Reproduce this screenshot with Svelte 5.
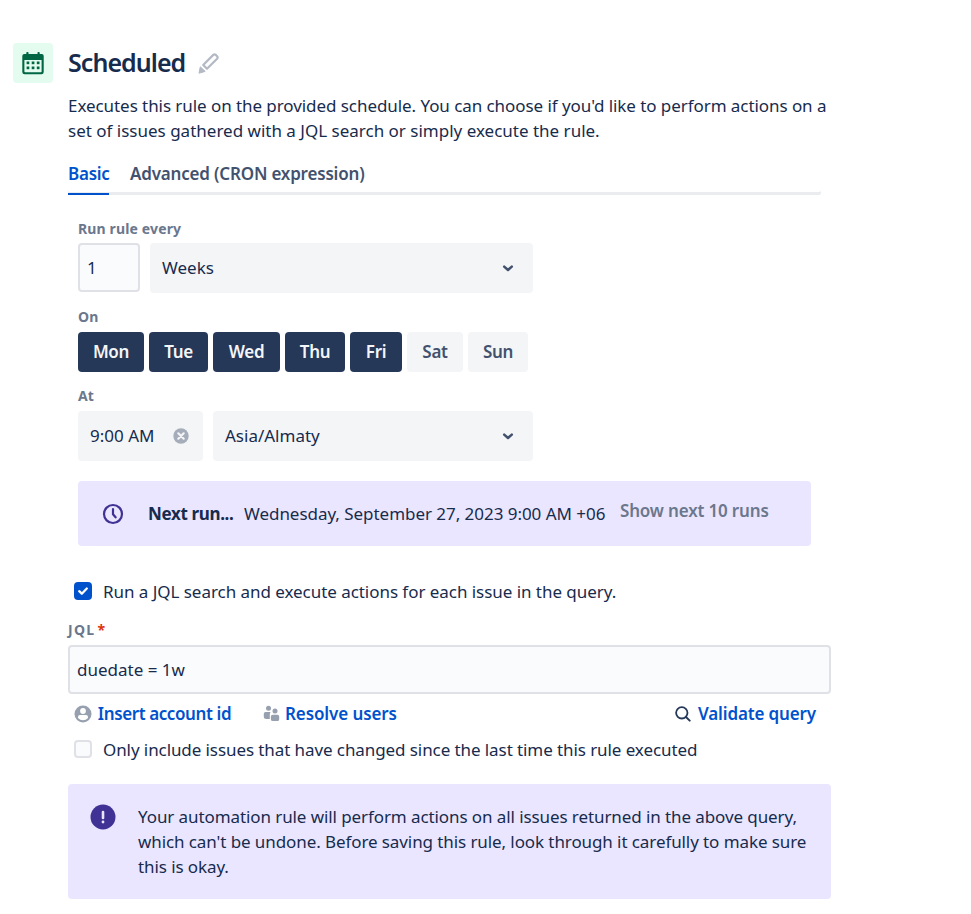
<script lang="ts">
  let days = $state([
    { name: 'Mon', width: 66, active: true },
    { name: 'Tue', width: 59, active: true },
    { name: 'Wed', width: 67, active: true },
    { name: 'Thu', width: 60, active: true },
    { name: 'Fri', width: 52, active: true },
    { name: 'Sat', width: 56, active: false },
    { name: 'Sun', width: 60, active: false },
  ]);

  let interval = $state('1');
  let jql = $state('duedate = 1w');
  let runSearch = $state(true);
  let onlyChanged = $state(false);
</script>

{#snippet chevron()}
  <svg class="chevron" width="12" height="8" viewBox="0 0 12 8">
    <path d="M2.2 2.6L6 6l3.800-3.400" fill="none" stroke="currentColor" stroke-width="2.500" stroke-linecap="round" stroke-linejoin="round" />
  </svg>
{/snippet}

<div class="rule">
  <div class="badge">
    <svg width="24" height="24" viewBox="0 0 24 24">
      <path
        fill="currentColor"
        fill-rule="evenodd"
        d="M3.300 3h17.400a2 2 0 0 1 2 2v16a2.300 2.300 0 0 1-2.300 2.300H3.600A2.300 2.300 0 0 1 1.300 21V5a2 2 0 0 1 2-2zM3.400 9v11.500q0 .8.8.8h15.600q.8 0 .8-.8V9z"
      />
      <g fill="currentColor">
        <rect x="5.300" y="1" width="2.200" height="4" rx=".8" />
        <rect x="16.500" y="1" width="2.200" height="4" rx=".8" />
        {#each [5.600, 10.700, 15.800] as x}
          <rect {x} y="10.500" width="2.700" height="2.700" />
          <rect {x} y="15.500" width="2.700" height="2.700" />
        {/each}
      </g>
    </svg>
  </div>

  <main>
    <header>
      <h1>Scheduled</h1>
      <svg class="pencil" width="22" height="22" viewBox="0 0 22 22">
        <path d="M5.200 13L15.300 2.900q1.200-1.200 2.400 0l1.400 1.400q1.200 1.200 0 2.400L9 16.800z" fill="none" stroke="currentColor" stroke-width="2.200" stroke-linejoin="round" />
        <path d="M2.300 14.800L7.200 19.400 1 21.200z" fill="currentColor" stroke="currentColor" stroke-linejoin="round" />
      </svg>
    </header>

    <p class="description">
      <span class="line l1">Executes this rule on the provided schedule. You can choose if you'd like to perform actions on a</span>
      <span class="line">set of issues gathered with a JQL search or simply execute the rule.</span>
    </p>

    <nav>
      <button class="tab selected">Basic</button>
      <button class="tab advanced">Advanced (CRON expression)</button>
    </nav>

    <section class="schedule">
      <div class="label">Run rule every</div>
      <div class="row">
        <input class="interval" bind:value={interval} />
        <div class="select unit"><span>Weeks</span>{@render chevron()}</div>
      </div>

      <div class="label on">On</div>
      <div class="days">
        {#each days as day}
          <button class="day" class:active={day.active} style="width: {day.width}px" onclick={() => (day.active = !day.active)}>
            {day.name}
          </button>
        {/each}
      </div>

      <div class="label at">At</div>
      <div class="row at-row">
        <div class="select time">
          <span>9:00 AM</span>
          <svg width="16" height="16" viewBox="0 0 16 16">
            <circle cx="8" cy="8" r="7.700" fill="#a5adba" />
            <path d="M5.300 5.300l5.400 5.400M10.700 5.300l-5.400 5.400" stroke="#f4f5f7" stroke-width="2.200" stroke-linecap="round" />
          </svg>
        </div>
        <div class="select zone"><span>Asia/Almaty</span>{@render chevron()}</div>
      </div>

      <div class="next">
        <svg width="22" height="22" viewBox="0 0 22 22">
          <circle cx="11" cy="11" r="9" fill="none" stroke="#403294" stroke-width="2.200" />
          <path d="M11 6v5.300l2.600 3" fill="none" stroke="#403294" stroke-width="2.200" stroke-linecap="round" stroke-linejoin="round" />
        </svg>
        <strong>Next run...</strong>
        <span class="date">Wednesday, September 27, 2023 9:00 AM +06</span>
        <button class="show">Show next 10 runs</button>
      </div>
    </section>

    <label class="check first">
      <input type="checkbox" bind:checked={runSearch} />
      <span class="box">
        <svg width="18" height="18" viewBox="0 0 18 18">
          <path d="M5.200 9.200l2.600 2.500 5-5.200" fill="none" stroke="currentColor" stroke-width="2.300" stroke-linecap="round" stroke-linejoin="round" />
        </svg>
      </span>
      <span class="search-text">Run a JQL search and execute actions for each issue in the query.</span>
    </label>

    <div class="label jql-label">JQL<em>*</em></div>
    <input class="jql" bind:value={jql} />

    <div class="actions">
      <button class="link">
        <svg width="18" height="18" viewBox="0 0 18 18">
          <circle cx="9" cy="9" r="8.500" fill="#97a0af" />
          <circle cx="9" cy="6" r="2.900" fill="#fff" />
          <path d="M4 13v-1.200q0-1.900 2-1.900h6q2 0 2 1.900V13q-2 2.300-5 2.300T4 13z" fill="#fff" />
        </svg>
        <span class="insert">Insert account id</span>
      </button>
      <button class="link users">
        <svg width="17" height="17" viewBox="0 0 17 17" fill="#97a0af">
          <circle cx="5.500" cy="3.300" r="2.500" />
          <path d="M2.600 7h5q-.8 1-.8 2.600V14H3.300Q.8 14 .8 12V8.800Q.8 7 2.600 7z" />
          <circle cx="12" cy="6" r="2.500" />
          <path d="M9.800 9.700h4.500q1.900 0 1.900 1.900v2.600q0 1.900-1.900 1.900H9.800q-1.900 0-1.900-1.900v-2.600q0-1.900 1.900-1.900z" />
        </svg>
        <span class="resolve">Resolve users</span>
      </button>
      <button class="link validate">
        <svg width="16" height="16" viewBox="0 0 16 16">
          <circle cx="6.800" cy="6.800" r="5.700" fill="none" stroke="#253858" stroke-width="1.800" />
          <path d="M11 11l3.700 3.700" stroke="#253858" stroke-width="1.900" stroke-linecap="round" />
        </svg>
        <span class="valid">Validate query</span>
      </button>
    </div>

    <label class="check">
      <input type="checkbox" bind:checked={onlyChanged} />
      <span class="box"></span>
      <span class="changed-text">Only include issues that have changed since the last time this rule executed</span>
    </label>

    <div class="notice">
      <svg width="26" height="26" viewBox="0 0 26 26">
        <circle cx="13" cy="13" r="12.500" fill="#403294" />
        <path d="M13 8v6" stroke="#eae6ff" stroke-width="2.600" stroke-linecap="round" />
        <circle cx="13" cy="18" r="1.400" fill="#eae6ff" />
      </svg>
      <p>
        <span class="line">Your automation rule will perform actions on all issues returned in the above query,</span>
        <span class="line">which can't be undone. Before saving this rule, look through it carefully to make sure</span>
        <span class="line">this is okay.</span>
      </p>
    </div>
  </main>
</div>

<style>
  :global(body) {
    background: #fff;
  }

  .rule {
    display: flex;
    gap: 15px;
    padding: 43px 0 0 13px;
    font-family: 'Noto Sans', 'Open Sans', sans-serif;
    font-size: 17px;
    line-height: 25px;
    color: #172b4d;
    white-space: nowrap;
  }

  button,
  input {
    font: inherit;
    color: inherit;
    letter-spacing: inherit;
    box-sizing: border-box;
    margin: 0;
    padding: 0;
    border: none;
    background: none;
    outline: none;
  }

  button {
    cursor: pointer;
  }

  svg {
    flex: none;
    display: block;
  }

  p,
  h1 {
    margin: 0;
  }

  .line {
    display: block;
  }

  .l1 {
    letter-spacing: -0.065px;
  }

  .badge {
    flex: none;
    display: flex;
    align-items: center;
    justify-content: center;
    width: 40px;
    height: 40px;
    border-radius: 4px;
    background: #e3fcef;
    color: #006644;
  }

  main {
    width: 763px;
  }

  header {
    display: flex;
    align-items: center;
    height: 40px;
  }

  h1 {
    width: 130px;
    padding-bottom: 2px;
    font-size: 25px;
    font-weight: 600;
    letter-spacing: -0.95px;
  }

  .pencil {
    color: #b3bac5;
  }

  .description {
    margin-top: 10px;
  }

  nav {
    display: flex;
    gap: 21px;
    width: 753px;
    height: 44px;
    margin-top: 8px;
    box-shadow: inset 0 -3px #ebecf0;
    border-radius: 2px;
  }

  .tab {
    height: 44px;
    font-weight: 600;
    letter-spacing: -0.25px;
    color: #42526e;
  }

  .tab.selected {
    width: 41px;
    color: #0052cc;
    box-shadow: inset 0 -2px #0052cc;
  }

  .tab.advanced {
    letter-spacing: -0.19px;
  }

  .schedule {
    padding: 24px 20px 0 10px;
  }

  .label {
    font-size: 14px;
    font-weight: 700;
    line-height: 20px;
    letter-spacing: 0.14px;
    color: #6b778c;
  }

  .row {
    display: flex;
    gap: 10px;
    margin-top: 4px;
  }

  .interval {
    width: 62px;
    height: 49px;
    padding-left: 7px;
    border: 2px solid #dfe1e6;
    border-radius: 4px;
    background: #fafbfc;
  }

  .select {
    display: flex;
    align-items: center;
    justify-content: space-between;
    box-sizing: border-box;
    height: 50px;
    padding: 0 19px 0 12px;
    border-radius: 4px;
    background: #f4f5f7;
  }

  .select span {
    padding-bottom: 2px;
  }

  .chevron {
    color: #42526e;
  }

  .unit {
    width: 383px;
  }

  .on {
    margin-top: 14px;
  }

  .days {
    display: flex;
    gap: 5px;
    margin-top: 5px;
  }

  .day {
    height: 40px;
    padding-bottom: 2px;
    border-radius: 4px;
    background: #f4f5f7;
    color: #42526e;
    font-weight: 600;
    letter-spacing: -0.3px;
  }

  .day.active {
    background: #253858;
    color: #f4f5f7;
  }

  .at {
    margin-top: 14px;
  }

  .at-row {
    margin-top: 5px;
  }

  .time {
    width: 125px;
    padding-right: 14px;
  }

  .zone {
    width: 320px;
  }

  .next {
    display: flex;
    align-items: center;
    box-sizing: border-box;
    height: 65px;
    margin-top: 20px;
    padding-left: 24px;
    border-radius: 4px;
    background: #eae6ff;
  }

  .next strong {
    width: 86px;
    margin: 0 10px 0 24px;
    font-weight: 700;
    letter-spacing: -0.35px;
  }

  .date {
    width: 362px;
    letter-spacing: -0.04px;
  }

  .show {
    margin: 0 0 6px 14px;
    font-weight: 600;
    letter-spacing: -0.17px;
    color: #6b778c;
  }

  .check {
    display: flex;
    align-items: center;
    height: 26px;
    padding-left: 6px;
  }

  .check.first {
    margin-top: 32px;
  }

  .search-text {
    letter-spacing: -0.045px;
  }

  .changed-text {
    letter-spacing: -0.085px;
  }

  .check input {
    position: absolute;
    opacity: 0;
  }

  .box {
    box-sizing: border-box;
    width: 18px;
    height: 18px;
    margin-right: 11px;
    border: 2px solid #dfe1e6;
    border-radius: 4px;
    background: #fafbfc;
    color: #fff;
  }

  input:checked + .box {
    border: none;
    background: #0052cc;
  }

  .jql-label {
    margin-top: 16px;
    letter-spacing: 1.3px;
  }

  em {
    margin-left: 2px;
    font-style: normal;
    color: #de350b;
  }

  .jql {
    display: block;
    width: 763px;
    height: 49px;
    margin-top: 5px;
    padding: 0 7px;
    border: 2px solid #dfe1e6;
    border-radius: 4px;
    background: #fafbfc;
  }

  .actions {
    display: flex;
    height: 39px;
    padding: 0 14px 0 6px;
  }

  .link {
    display: flex;
    align-items: center;
    gap: 5px;
    height: 39px;
    font-weight: 600;
    color: #0052cc;
  }

  .insert {
    width: 135px;
    letter-spacing: -0.4px;
  }

  .users {
    margin-left: 31px;
  }

  .resolve {
    letter-spacing: -0.1px;
  }

  .validate {
    margin-left: auto;
    gap: 6px;
  }

  .valid {
    width: 120px;
    letter-spacing: -0.15px;
  }

  .actions + .check {
    margin-top: 3px;
  }

  .notice {
    display: flex;
    box-sizing: border-box;
    height: 115px;
    margin-top: 22px;
    padding: 20px 0 0 22px;
    gap: 22px;
    border-radius: 4px;
    background: #eae6ff;
    letter-spacing: -0.09px;
  }
</style>
